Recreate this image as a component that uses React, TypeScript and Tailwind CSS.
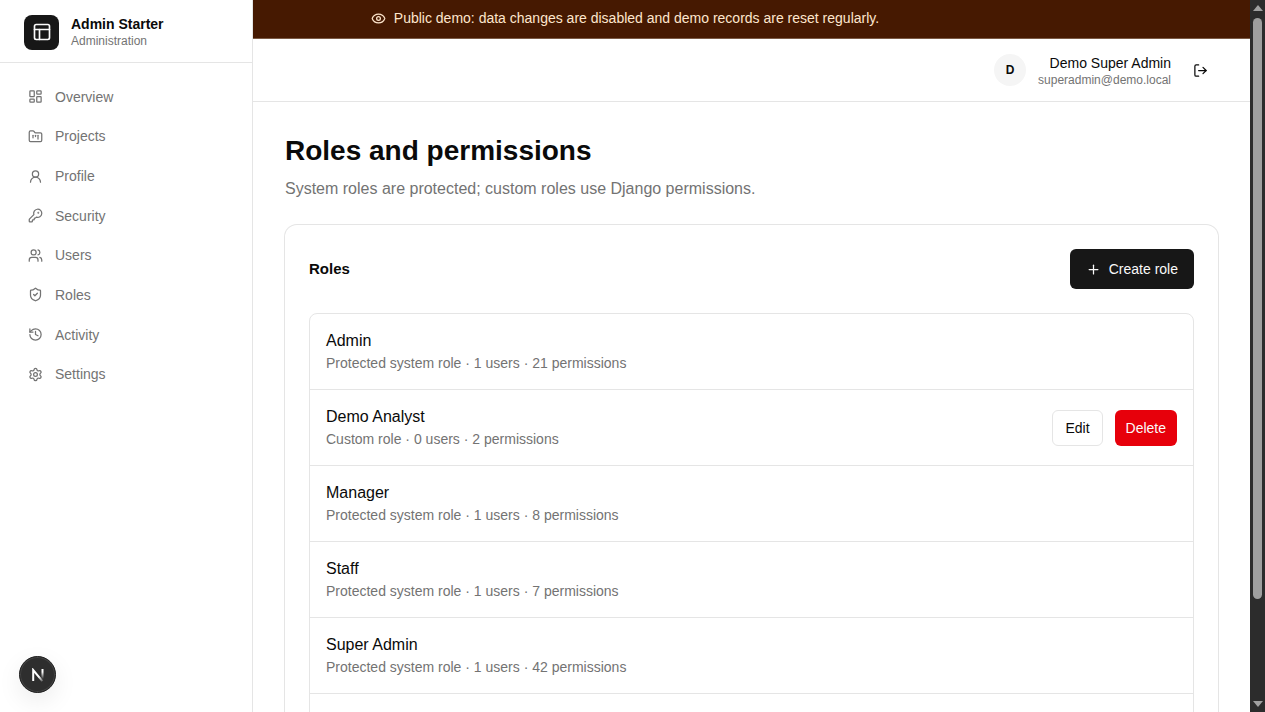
import {
  Eye,
  FolderKanban,
  History,
  KeyRound,
  LayoutDashboard,
  LogOut,
  PanelsTopLeft,
  Plus,
  Settings,
  ShieldCheck,
  UserRound,
  Users,
  type LucideIcon,
} from "lucide-react";

type NavItem = { label: string; icon: LucideIcon };

const navItems: NavItem[] = [
  { label: "Overview", icon: LayoutDashboard },
  { label: "Projects", icon: FolderKanban },
  { label: "Profile", icon: UserRound },
  { label: "Security", icon: KeyRound },
  { label: "Users", icon: Users },
  { label: "Roles", icon: ShieldCheck },
  { label: "Activity", icon: History },
  { label: "Settings", icon: Settings },
];

type Role = { name: string; system: boolean; users: number; permissions: number };

const roles: Role[] = [
  { name: "Admin", system: true, users: 1, permissions: 21 },
  { name: "Demo Analyst", system: false, users: 0, permissions: 2 },
  { name: "Manager", system: true, users: 1, permissions: 8 },
  { name: "Staff", system: true, users: 1, permissions: 7 },
  { name: "Super Admin", system: true, users: 1, permissions: 42 },
];

function Sidebar() {
  return (
    <aside className="flex w-[253px] shrink-0 flex-col border-r border-neutral-200 bg-white">
      <div className="flex h-[63px] shrink-0 items-center gap-3 border-b border-neutral-200 px-6 pt-0.5">
        <span className="flex size-[35px] items-center justify-center rounded-lg bg-neutral-900 text-neutral-50">
          <PanelsTopLeft className="size-5" strokeWidth={2} />
        </span>
        <div>
          <p className="text-sm leading-[18px] font-semibold">Admin Starter</p>
          <p className="text-xs leading-4 text-neutral-500">Administration</p>
        </div>
      </div>
      <nav aria-label="Main" className="px-4 pt-[14px]">
        <ul className="grid h-[317px] grid-rows-8">
          {navItems.map(({ label, icon: Icon }) => (
            <li key={label} className="flex items-center">
              <a
                href="#"
                className="flex flex-1 items-center gap-3 rounded-lg px-3 py-2 text-sm text-neutral-500 hover:bg-neutral-100"
              >
                <Icon className="size-[15px]" />
                {label}
              </a>
            </li>
          ))}
        </ul>
      </nav>
    </aside>
  );
}

function Banner() {
  return (
    <div className="flex h-[39px] shrink-0 items-center justify-center gap-2 border-b border-[#7b5a45] bg-amber-950 pr-[253px] pb-0.5 text-sm text-[#fee6cd]">
      <Eye className="size-[15px]" />
      <p>Public demo: data changes are disabled and demo records are reset regularly.</p>
    </div>
  );
}

function TopBar() {
  return (
    <header className="flex h-[63px] shrink-0 items-center justify-end border-b border-neutral-200 bg-white pr-8">
      <span className="mr-3 flex size-8 items-center justify-center rounded-full bg-neutral-100 text-xs font-semibold">
        D
      </span>
      <div className="mr-3 pt-px text-right">
        <p className="text-sm leading-[18px]">Demo Super Admin</p>
        <p className="text-xs leading-4 text-neutral-500">superadmin@demo.local</p>
      </div>
      <button type="button" aria-label="Sign out" className="flex size-[35px] items-center justify-center rounded-md">
        <LogOut className="size-[15px]" />
      </button>
    </header>
  );
}

function RoleRow({ role }: { role: Role }) {
  return (
    <li className="flex h-[76px] items-center justify-between border-b border-neutral-200 px-4">
      <div>
        <p className="text-base leading-6">{role.name}</p>
        <p className="text-sm leading-[21px] text-neutral-500">
          {role.system ? "Protected system role" : "Custom role"} · {role.users} users · {role.permissions}{" "}
          permissions
        </p>
      </div>
      {!role.system && (
        <div className="flex gap-3">
          <button
            type="button"
            className="h-9 rounded-md border border-neutral-200 bg-white px-3 text-sm hover:bg-neutral-100"
          >
            Edit
          </button>
          <button type="button" className="h-9 rounded-md bg-[#e7000b] px-[11px] text-sm text-neutral-50">
            Delete
          </button>
        </div>
      )}
    </li>
  );
}

function RolesCard() {
  return (
    <section className="mt-6 rounded-xl bg-white p-6 shadow-xs ring-1 ring-neutral-200">
      <div className="mb-6 flex items-center justify-between">
        <h2 className="text-[15px] leading-6 font-semibold">Roles</h2>
        <button
          type="button"
          className="flex h-10 items-center gap-2 rounded-md bg-neutral-900 px-4 text-sm text-neutral-50"
        >
          <Plus className="size-[15px]" />
          Create role
        </button>
      </div>
      <ul className="rounded-lg border border-neutral-200">
        {roles.map((role) => (
          <RoleRow key={role.name} role={role} />
        ))}
        <li className="h-[76px]" />
      </ul>
    </section>
  );
}

function ScrollRail() {
  return (
    <div aria-hidden="true" className="flex w-[15px] shrink-0 flex-col items-center bg-[#2c2c2c] py-[5px]">
      <svg viewBox="0 0 10 6" className="h-[6px] w-[10px] shrink-0 fill-[#a0a0a0]">
        <path d="M5 0 10 6H0z" />
      </svg>
      <div className="mt-[7px] flex w-[9px] flex-1 flex-col">
        <div className="h-[85%] rounded-full bg-[#9f9f9f]" />
      </div>
      <svg viewBox="0 0 10 6" className="h-[6px] w-[10px] shrink-0 fill-[#a0a0a0]">
        <path d="M0 0h10L5 6z" />
      </svg>
    </div>
  );
}

function DevBadge() {
  return (
    <button
      type="button"
      aria-label="Open developer tools"
      className="fixed bottom-[19px] left-[19px] flex size-[37px] items-center justify-center rounded-full border border-[#1f1f1f] bg-[#2e2e2e] shadow-[0_8px_24px_rgba(0,0,0,0.08)] inset-ring inset-ring-[#444444]"
    >
      <svg viewBox="0 0 14 14" className="size-[14px]" fill="none" strokeWidth="2">
        <defs>
          <linearGradient id="diag" x1="2" y1="1" x2="12" y2="14" gradientUnits="userSpaceOnUse">
            <stop offset="0.6" stopColor="#fff" />
            <stop offset="1" stopColor="#fff" stopOpacity="0.1" />
          </linearGradient>
          <linearGradient id="stem" x1="11" y1="1" x2="11" y2="11" gradientUnits="userSpaceOnUse">
            <stop offset="0.3" stopColor="#fff" />
            <stop offset="1" stopColor="#fff" stopOpacity="0" />
          </linearGradient>
        </defs>
        <path d="M2.2 13V2L11.4 13.2" stroke="url(#diag)" />
        <path d="M11.5 1v10" stroke="url(#stem)" />
      </svg>
    </button>
  );
}

export default function App() {
  return (
    <div className="flex h-screen overflow-hidden bg-white font-['Liberation_Sans',Arial,sans-serif] text-neutral-950">
      <Sidebar />
      <div className="flex min-w-0 flex-1 flex-col overflow-hidden">
        <Banner />
        <TopBar />
        <main className="px-8 pt-[31px]">
          <h1 className="text-[28px] leading-9 font-semibold">Roles and permissions</h1>
          <p className="mt-2 text-base leading-6 text-neutral-500">
            System roles are protected; custom roles use Django permissions.
          </p>
          <RolesCard />
        </main>
      </div>
      <ScrollRail />
      <DevBadge />
    </div>
  );
}
